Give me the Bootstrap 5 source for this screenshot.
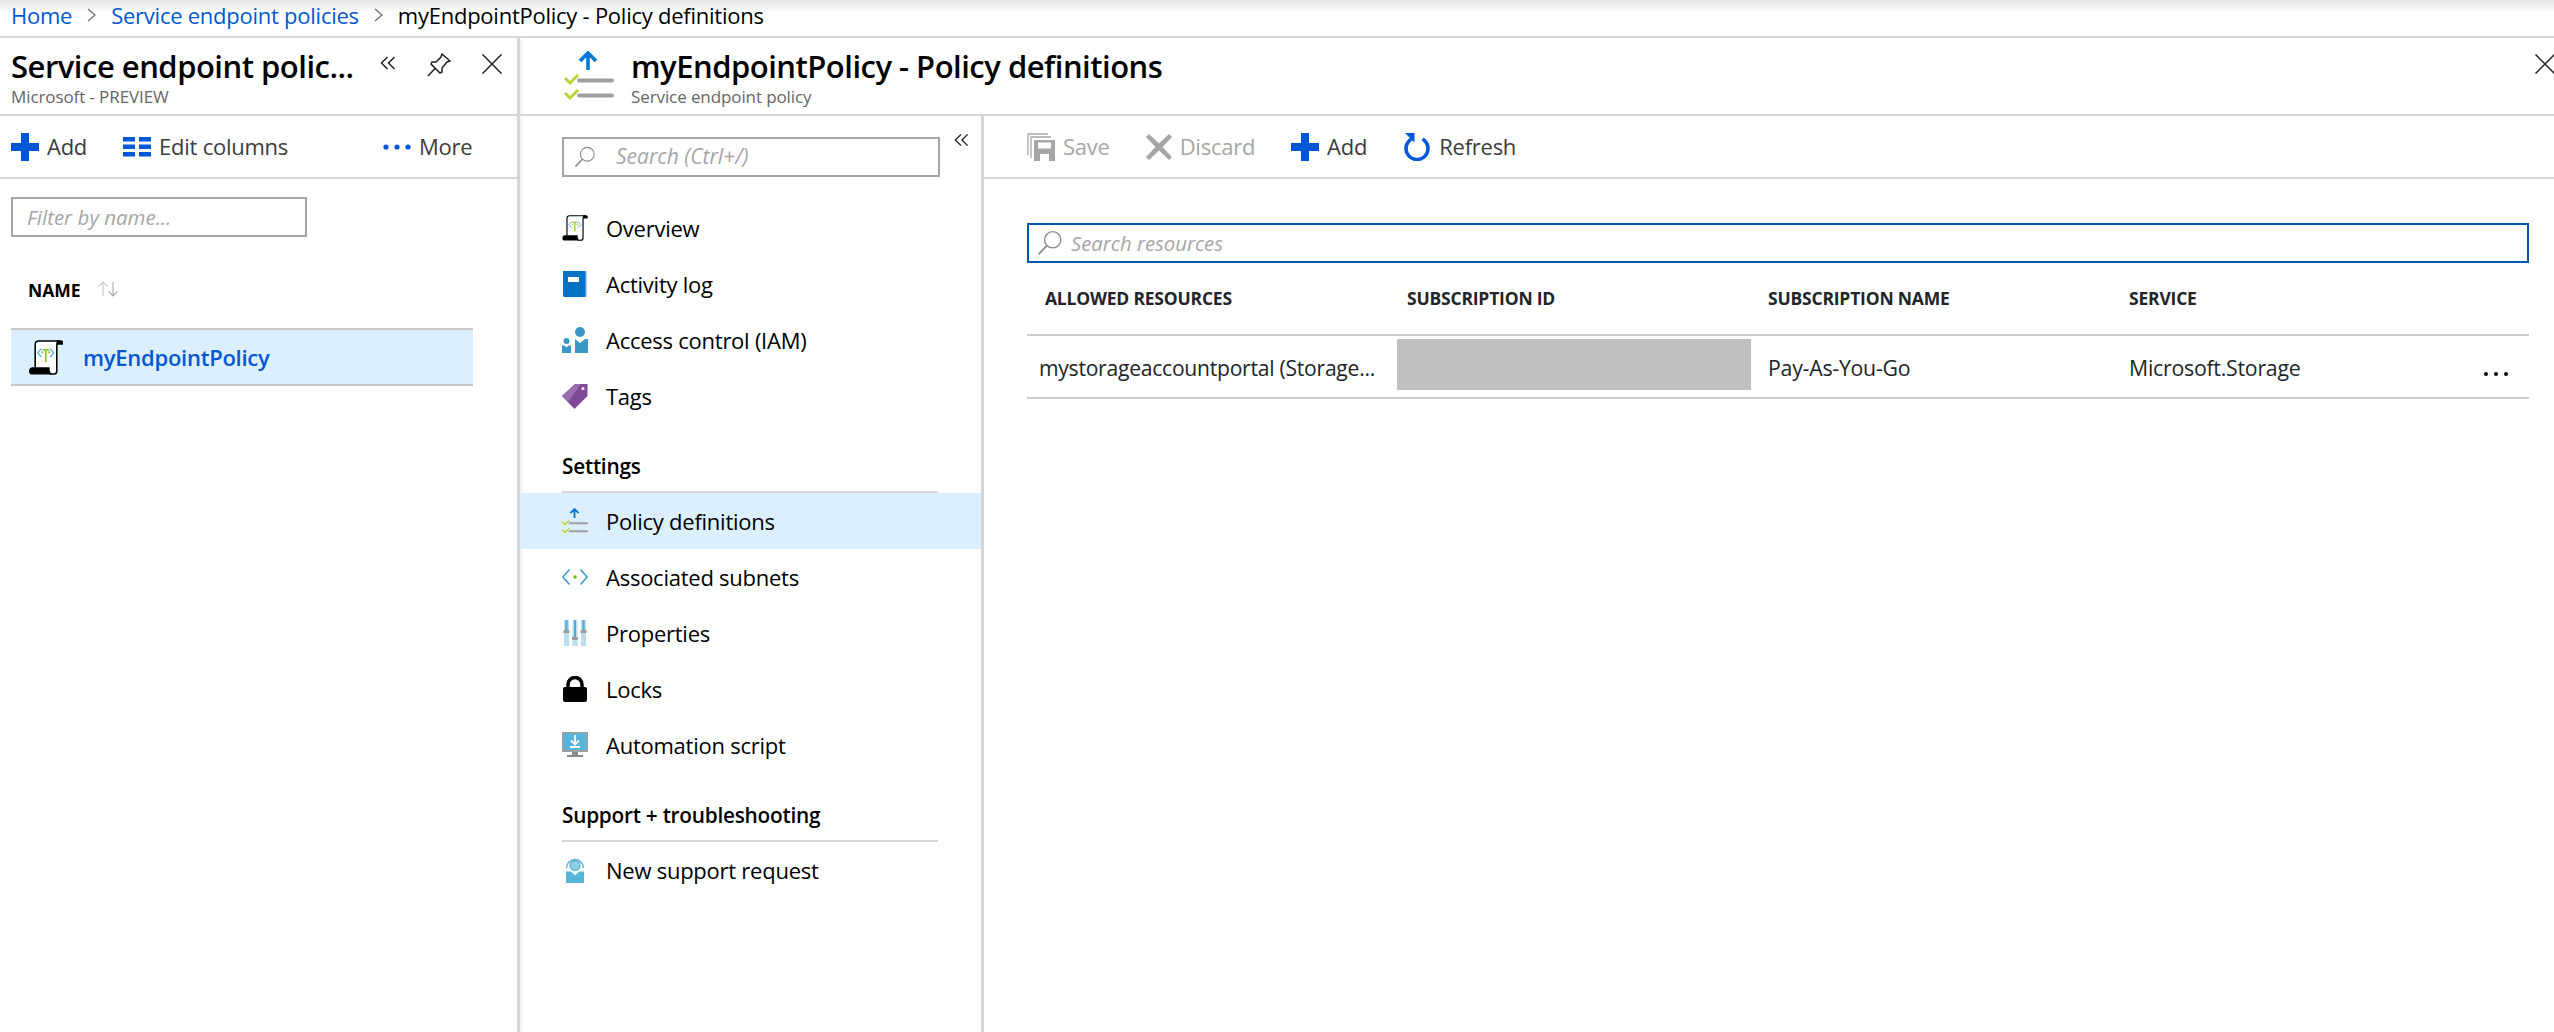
<!DOCTYPE html>
<html lang="en">
<head>
    <meta charset="UTF-8">
    <title>myEndpointPolicy - Policy definitions</title>
    <link href="https://cdn.jsdelivr.net/npm/bootstrap@5.3.0/dist/css/bootstrap.min.css" rel="stylesheet">
    <style>
        html, body { height: 100%; }
        body {
            font-family: "Open Sans", "Noto Sans", sans-serif;
            font-size: 22px;
            letter-spacing: -0.25px;
            color: #000;
            overflow: hidden;
            display: flex;
            flex-direction: column;
        }
        a { text-decoration: none; color: #0058d0; }

        /* breadcrumb */
        .crumbs {
            height: 38px;
            flex: none;
            padding-left: 11px;
            border-bottom: 2px solid #d6d6d6;
            background: linear-gradient(#e4e4e4, #fff 13px);
            --bs-breadcrumb-margin-bottom: 0;
            --bs-breadcrumb-item-padding-x: 0;
        }
        .crumbs .breadcrumb { height: 30px; align-items: center; flex-wrap: nowrap; white-space: nowrap; }
        .crumbs .breadcrumb-item + .breadcrumb-item::before { display: none; }
        .crumbs .breadcrumb-item.active { color: #000; }
        .crumb-sep { width: 9px; height: 14px; margin: 0 15px; }

        .workspace { flex: 1; min-height: 0; }
        .main-split { flex: 1; min-height: 0; }
        .res-pane { flex: 1; min-width: 0; }

        /* left blade */
        .blade-list {
            width: 520px;
            flex: none;
            border-right: 3px solid #d6d6d6;
            box-shadow: 1px 0 3px #e8e8e8;
        }
        .blade-head { height: 78px; border-bottom: 2px solid #d6d6d6; flex: none; }
        .list-head { padding-left: 11px; }
        .list-head .head-text { width: 369px; flex: none; }
        .head-text { padding-top: 10px; white-space: nowrap; }
        .blade-title { font-size: 31px; font-weight: 600; line-height: 36px; margin: 0; letter-spacing: -0.5px; }
        .blade-sub { font-size: 17px; line-height: 20px; color: #666; margin-top: 3px; letter-spacing: -0.1px; }
        .btn-collapse { margin-top: 18px; flex: none; }
        .btn-pin { margin: 15px 0 0 31px; flex: none; }
        .btn-close-list { margin: 16px 0 0 31px; flex: none; }
        .main-head { padding-left: 44px; }
        .head-policy { margin: 13px 17px 0 0; flex: none; }
        .btn-close-main { margin: 16px -1px 0 auto; flex: none; }

        .cmdbar { height: 63px; border-bottom: 2px solid #d6d6d6; flex: none; }
        .cmd { color: #3c3c3c; white-space: nowrap; }
        .cmd-off { color: #a6a6a6; }
        .ps-list { padding-left: 11px; }
        .cmd-edit { margin-left: 36px; }
        .cmd-dots { margin-left: 95px; }
        .main-cmd { padding-left: 43px; }
        .ms-cmd { margin-left: 36px; }

        .filter-wrap { padding: 18px 0 0 11px; width: 307px; }
        .filter-box {
            border: 2px solid #a6a6a6;
            border-radius: 0;
            height: 40px;
            font-size: 20.5px;
            font-style: italic;
            padding: 0 14px;
        }
        .filter-box::placeholder { color: #a6a6a6; }
        .filter-box:focus { box-shadow: none; border-color: #a6a6a6; }

        .name-head { font-size: 17.5px; font-weight: 700; margin: 40px 0 0 28px; height: 51px; letter-spacing: 0; }
        .name-row {
            margin: 0 44px 0 11px;
            height: 58px;
            background: #dcefff;
            border-top: 2px solid #c8c8c8;
            border-bottom: 2px solid #c8c8c8;
            padding-left: 18px;
            gap: 20px;
            font-weight: 600;
        }

        /* resource menu */
        .res-menu { width: 464px; flex: none; border-right: 3px solid #d6d6d6; }
        .search-row { padding: 17px 0 0 42px; }
        .menu-search { width: 378px; margin-top: 4px; height: 40px; border: 2px solid #a6a6a6; padding-left: 10px; gap: 20px; flex: none; }
        .menu-search span { color: #a6a6a6; font-style: italic; font-size: 21px; letter-spacing: 0; white-space: nowrap; }
        .menu-collapse { margin-left: 14px; flex: none; }
        .menu-list { padding-top: 23px; }
        .menu-group { height: 69px; margin: 0 43px 0 42px; border-bottom: 2px solid #d6d6d6; font-weight: 600; padding-bottom: 9px; font-size: 20.8px; }
        .menu-item { height: 56px; padding-left: 42px; gap: 18px; white-space: nowrap; color: #000; }
        .menu-item.is-on { background: #dcefff; }
        .menu-icon { width: 26px; height: 26px; flex: none; }

        /* resources */
        .res-search { height: 40px; border: 2px solid #0058ad; margin: 44px 25px 0 43px; padding-left: 8px; gap: 8px; }
        .res-search span { color: #a6a6a6; font-style: italic; font-size: 20.3px; letter-spacing: 0; white-space: nowrap; }
        .res-table { table-layout: fixed; width: calc(100% - 68px); margin: 0 25px 0 43px; --bs-table-border-color: #cdcdcd; }
        .res-table th { font-size: 17.5px; font-weight: 700; height: 72px; padding: 0 0 0 18px; vertical-align: middle; border-bottom-width: 2px; letter-spacing: -0.2px; }
        .res-table td { font-size: 21.3px; height: 63px; padding: 3px 0 0 18px; vertical-align: middle; border-bottom-width: 2px; white-space: nowrap; }
        .res-table td.first-cell { font-size: 21.1px; padding-left: 12px; overflow: hidden; }
        .res-table td.mask-cell { padding: 0 0 4px 8px; }
        .res-col-a { width: 362px; }
        .res-col-b { width: 361px; }
        .id-mask { height: 51px; width: 354px; background: #c0c0c0; }
        .row-more { gap: 6px; margin-top: 12px; padding-right: 21px; }
        .row-more i { width: 4px; height: 4px; border-radius: 50%; background: #000; display: block; }
    </style>
</head>
<body>
    <svg width="0" height="0" class="position-absolute">
        <defs>
            <symbol id="ico-scroll" viewBox="0 0 33 34">
                <path d="M6 27V4.500Q6 1 9.500 1H30Q27 1.500 27 5V30Q27 33 24 33H20" fill="#fff" stroke="#000" stroke-width="1.500"/>
                <path d="M27 .2h4q2 0 2 1.800v2.500h-6z" fill="#000"/>
                <path d="M3 26.500h17v2.500q0 2.500 2.500 4.500H3Q0 33.500 0 30q0-3 3-3.500z" fill="#000"/>
                <path d="M12 8.500L8.500 12.500l3.500 4M20.500 8.500L24 12.500l-3.500 4" fill="none" stroke="#59b4e0" stroke-width="1.300"/>
                <path d="M13 9.500h6.500M16.300 9.500V21.500" fill="none" stroke="#8cc21a" stroke-width="1.500"/>
                <circle cx="13" cy="12" r="1" fill="#8cc21a"/><circle cx="19.500" cy="12" r="1" fill="#8cc21a"/>
            </symbol>
            <symbol id="ico-policy" viewBox="0 0 50 50">
                <path d="M24 2V19M16 10l8-8 8 8" fill="none" stroke="#0078d4" stroke-width="3.600"/>
                <path d="M15 29.500h33M15 44.500h33" stroke="#a0a0a0" stroke-width="3.800" stroke-linecap="round"/>
                <path d="M1 27l5 5 8-8M1 42l5 5 8-8" fill="none" stroke="#b8d432" stroke-width="3"/>
            </symbol>
            <symbol id="ico-lens" viewBox="0 0 24 24">
                <circle cx="14.500" cy="9" r="7.500" fill="none" stroke="#8a8a8a" stroke-width="1.300"/>
                <path d="M9 14.500L1.500 22.500" stroke="#8a8a8a" stroke-width="1.600"/>
            </symbol>
            <symbol id="ico-plus" viewBox="0 0 28 28">
                <path d="M10 0h8v10h10v8H18v10h-8V18H0v-8h10z" fill="#0058d8"/>
            </symbol>
            <symbol id="ico-dbl" viewBox="0 0 16 14">
                <path d="M7.500 1L1.500 7l6 6M14.500 1l-6 6 6 6" fill="none" stroke="#222" stroke-width="1.500"/>
            </symbol>
            <symbol id="ico-x" viewBox="0 0 20 20">
                <path d="M.5.5l19 19M19.500.5l-19 19" stroke="#222" stroke-width="1.500"/>
            </symbol>
            <symbol id="ico-chev" viewBox="0 0 9 14">
                <path d="M1 1l7 6-7 6" fill="none" stroke="#707070" stroke-width="1.300"/>
            </symbol>
        </defs>
    </svg>

    <!-- Breadcrumb -->
    <nav class="crumbs">
        <ol class="breadcrumb">
            <li class="breadcrumb-item"><a href="#">Home</a></li>
            <li class="d-flex"><svg class="crumb-sep"><use href="#ico-chev"/></svg></li>
            <li class="breadcrumb-item"><a href="#">Service endpoint policies</a></li>
            <li class="d-flex"><svg class="crumb-sep"><use href="#ico-chev"/></svg></li>
            <li class="breadcrumb-item active">myEndpointPolicy - Policy definitions</li>
        </ol>
    </nav>

    <div class="workspace d-flex">
        <!-- Left blade -->
        <section class="blade-list d-flex flex-column">
            <header class="blade-head list-head d-flex align-items-start">
                <div class="head-text">
                    <h1 class="blade-title">Service endpoint polic...</h1>
                    <div class="blade-sub">Microsoft - PREVIEW</div>
                </div>
                <svg class="btn-collapse" width="16" height="14"><use href="#ico-dbl"/></svg>
                <svg class="btn-pin" width="24" height="24" viewBox="0 0 24 24">
                    <path d="M15 1l8 7-3 1-5 6 0 4-2 1-9-9 1-2 4 0 5-5z" fill="none" stroke="#222" stroke-width="1.500"/>
                    <path d="M8 15.500L1 23" stroke="#222" stroke-width="1.500"/>
                </svg>
                <svg class="btn-close-list" width="20" height="20"><use href="#ico-x"/></svg>
            </header>
            <div class="cmdbar d-flex align-items-center ps-list">
                <svg width="28" height="28"><use href="#ico-plus"/></svg>
                <span class="cmd ms-2">Add</span>
                <svg width="28" height="20" viewBox="0 0 28 20" class="cmd-edit">
                    <path d="M0 0h12v4.500H0zM16 0h12v4.500H16zM0 7.500h12V12H0zM16 7.500h12V12H16zM0 15h12v4.500H0zM16 15h12v4.500H16z" fill="#0058d8"/>
                </svg>
                <span class="cmd ms-2">Edit columns</span>
                <svg width="28" height="6" viewBox="0 0 28 6" class="cmd-dots">
                    <circle cx="3" cy="3" r="2.600" fill="#0058d8"/><circle cx="14" cy="3" r="2.600" fill="#0058d8"/><circle cx="25" cy="3" r="2.600" fill="#0058d8"/>
                </svg>
                <span class="cmd ms-2">More</span>
            </div>
            <div class="filter-wrap">
                <input class="form-control filter-box" placeholder="Filter by name...">
            </div>
            <div class="name-head d-flex align-items-start gap-3">
                <span>NAME</span>
                <svg width="22" height="16" viewBox="0 0 22 16" class="mt-1">
                    <path d="M6 15V1M1.500 5.500L6 1l4.500 4.500" fill="none" stroke="#c8c8c8" stroke-width="1.100"/>
                    <path d="M16 1v14M11.500 10.500L16 15l4.500-4.500" fill="none" stroke="#a8a8a8" stroke-width="1.100"/>
                </svg>
            </div>
            <a href="#" class="name-row d-flex align-items-center">
                <svg width="34" height="35"><use href="#ico-scroll"/></svg>
                <span>myEndpointPolicy</span>
            </a>
        </section>

        <!-- Main blade -->
        <section class="flex-fill d-flex flex-column">
            <header class="blade-head main-head d-flex align-items-start">
                <svg class="head-policy" width="50" height="50"><use href="#ico-policy"/></svg>
                <div class="head-text">
                    <h1 class="blade-title">myEndpointPolicy - Policy definitions</h1>
                    <div class="blade-sub">Service endpoint policy</div>
                </div>
                <svg class="btn-close-main" width="20" height="20"><use href="#ico-x"/></svg>
            </header>
            <div class="main-split d-flex">
                <nav class="res-menu">
                    <div class="search-row d-flex align-items-start">
                        <div class="menu-search d-flex align-items-center">
                            <svg width="22" height="22"><use href="#ico-lens"/></svg>
                            <span>Search (Ctrl+/)</span>
                        </div>
                        <svg class="menu-collapse" width="15" height="14"><use href="#ico-dbl"/></svg>
                    </div>
                    <div class="menu-list">
                        <a class="menu-item d-flex align-items-center" href="#">
                            <svg class="menu-icon"><use href="#ico-scroll"/></svg>Overview
                        </a>
                        <a class="menu-item d-flex align-items-center" href="#">
                            <svg class="menu-icon" viewBox="0 0 26 26">
                                <path d="M1 0h24v26H1z" fill="#a9d3ee"/><path d="M1 0h22.500v26H3q-2 0-2-2z" fill="#0072c6"/><path d="M6 6h11v5H6z" fill="#fff"/>
                            </svg>Activity log
                        </a>
                        <a class="menu-item d-flex align-items-center" href="#">
                            <svg class="menu-icon" viewBox="0 0 26 26">
                                <circle cx="18" cy="5" r="5" fill="#3999c6"/><path d="M13 12l5 4 5-4h3v14H13z" fill="#3999c6"/>
                                <circle cx="4.500" cy="14" r="3" fill="#3999c6"/><path d="M0 18.500h2.500l2 2 2-2H9V26H0z" fill="#3999c6"/>
                            </svg>Access control (IAM)
                        </a>
                        <a class="menu-item d-flex align-items-center" href="#">
                            <svg class="menu-icon" viewBox="0 0 26 26">
                                <path d="M0 13L13 1h12.500v12L12.500 26z" fill="#804998"/><path d="M0 13L13 1h6L6 19z" fill="#9a6fb0"/><circle cx="21" cy="5.500" r="1.500" fill="#fff"/>
                            </svg>Tags
                        </a>
                        <div class="menu-group d-flex align-items-end">Settings</div>
                        <a class="menu-item is-on d-flex align-items-center" href="#">
                            <svg class="menu-icon"><use href="#ico-policy"/></svg>Policy definitions
                        </a>
                        <a class="menu-item d-flex align-items-center" href="#">
                            <svg class="menu-icon" viewBox="0 0 26 26">
                                <path d="M7.500 5.500L.8 13l6.700 7.500M18.500 5.500L25.200 13l-6.700 7.500" fill="none" stroke="#3999c6" stroke-width="1.500"/>
                                <circle cx="13" cy="13" r="1.800" fill="#7fba00"/>
                            </svg>Associated subnets
                        </a>
                        <a class="menu-item d-flex align-items-center" href="#">
                            <svg class="menu-icon" viewBox="0 0 26 26">
                                <path d="M2 0h5v26H2zM10.500 0h5v26h-5zM19 0h5v26h-5z" fill="#b8dff0"/>
                                <path d="M3.500 0h2v11h-2zM12 0h2v18h-2zM20.500 0h2v11h-2z" fill="#4fa8d4"/>
                                <path d="M1.500 10h6v3h-6zM10 17h6v3h-6zM18.500 10h6v3h-6z" fill="#9c9c9c"/>
                            </svg>Properties
                        </a>
                        <a class="menu-item d-flex align-items-center" href="#">
                            <svg class="menu-icon" viewBox="0 0 26 26">
                                <path d="M6 12V8.500a7 7 0 0 1 14 0V12" fill="none" stroke="#000" stroke-width="3.500"/>
                                <rect x="1" y="11" width="24" height="15" rx="2" fill="#000"/>
                            </svg>Locks
                        </a>
                        <a class="menu-item d-flex align-items-center" href="#">
                            <svg class="menu-icon" viewBox="0 0 26 26">
                                <path d="M0 0h26v20H0z" fill="#a0a0a0"/><path d="M1.500 1.500h23V18h-23z" fill="#59b4d9"/>
                                <path d="M10 20h6v3h-6zM5 23h16v2H5z" fill="#8a8a8a"/>
                                <path d="M13 3v9M9 8.500l4 4 4-4M8 15h10" fill="none" stroke="#fff" stroke-width="1.800"/>
                            </svg>Automation script
                        </a>
                        <div class="menu-group d-flex align-items-end">Support + troubleshooting</div>
                        <a class="menu-item d-flex align-items-center" href="#">
                            <svg class="menu-icon" viewBox="0 0 26 26">
                                <path d="M4.500 11a8.500 8.500 0 1 1 17 0" fill="none" stroke="#59b4d9" stroke-width="1.500"/>
                                <circle cx="13" cy="8.500" r="5.500" fill="#59b4d9"/><circle cx="13" cy="8.500" r="4" fill="#fff" opacity=".35"/>
                                <path d="M4 14.500h5l4 4 4-4h5V26H4z" fill="#59b4d9"/>
                            </svg>New support request
                        </a>
                    </div>
                </nav>

                <div class="res-pane">
                    <div class="cmdbar d-flex align-items-center main-cmd">
                        <svg width="28" height="28" viewBox="0 0 28 28">
                            <path d="M1 22V1h20M4 25V4h20" fill="none" stroke="#a6a6a6" stroke-width="1.300"/>
                            <path d="M7 7h21v21H7z" fill="#a6a6a6"/><path d="M11 9.500h13v6H11zM13 21h9v7h-9z" fill="#fff"/>
                        </svg>
                        <span class="cmd cmd-off ms-2">Save</span>
                        <svg width="26" height="28" viewBox="0 0 26 28" class="ms-cmd">
                            <path d="M3 1l10 9.500L23 1l3 3-9.500 10L26 24l-3 3-10-9.500L3 27l-3-3 9.500-10L0 4z" fill="#a6a6a6"/>
                        </svg>
                        <span class="cmd cmd-off ms-2">Discard</span>
                        <svg width="28" height="28" class="ms-cmd"><use href="#ico-plus"/></svg>
                        <span class="cmd ms-2">Add</span>
                        <svg width="28" height="28" viewBox="0 0 28 28" class="ms-cmd">
                            <path d="M8.500 6a11 11 0 1 0 11 0" fill="none" stroke="#0058d8" stroke-width="3.600"/>
                            <path d="M2 0h9.500v9.500z" fill="#0058d8"/>
                        </svg>
                        <span class="cmd ms-2">Refresh</span>
                    </div>

                    <div class="res-search d-flex align-items-center">
                        <svg width="26" height="26"><use href="#ico-lens"/></svg>
                        <span>Search resources</span>
                    </div>

                    <table class="table res-table mb-0">
                        <thead>
                            <tr>
                                <th class="res-col-a">ALLOWED RESOURCES</th>
                                <th class="res-col-b">SUBSCRIPTION ID</th>
                                <th class="res-col-b">SUBSCRIPTION NAME</th>
                                <th>SERVICE</th>
                            </tr>
                        </thead>
                        <tbody>
                            <tr>
                                <td class="first-cell">mystorageaccountportal (Storage...</td>
                                <td class="mask-cell"><div class="id-mask"></div></td>
                                <td>Pay-As-You-Go</td>
                                <td>
                                    <div class="d-flex justify-content-between align-items-center">
                                        <span>Microsoft.Storage</span>
                                        <div class="row-more d-flex"><i></i><i></i><i></i></div>
                                    </div>
                                </td>
                            </tr>
                        </tbody>
                    </table>
                </div>
            </div>
        </section>
    </div>

    <script src="https://cdn.jsdelivr.net/npm/bootstrap@5.3.0/dist/js/bootstrap.bundle.min.js"></script>
</body>
</html>
